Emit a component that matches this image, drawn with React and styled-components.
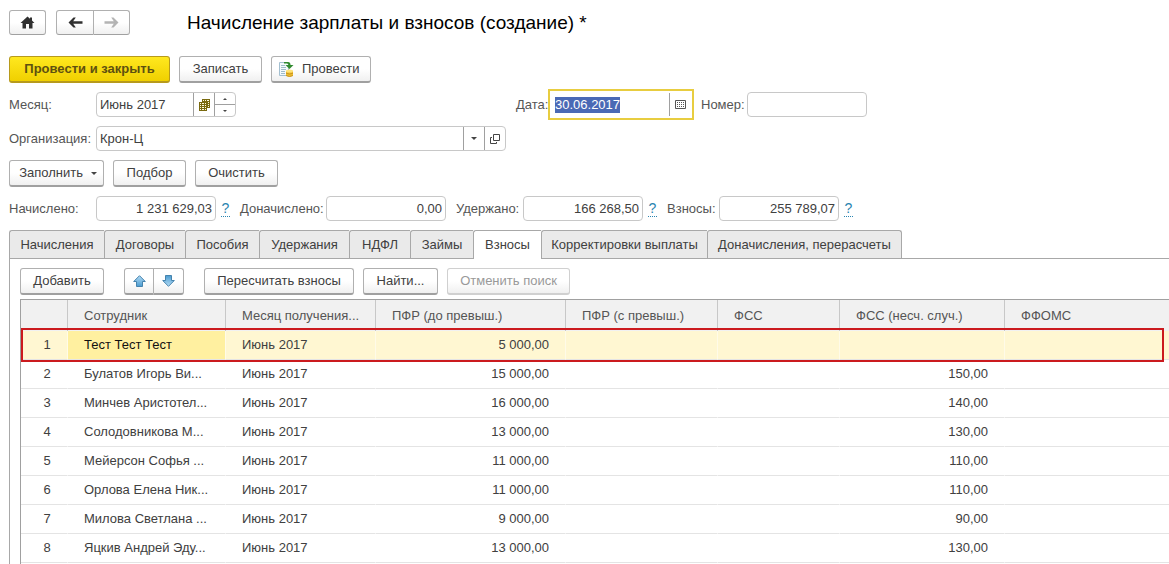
import React, { useState } from 'react';
import styled, { createGlobalStyle, css } from 'styled-components';

const GlobalStyle = createGlobalStyle`
  * {
    box-sizing: border-box;
  }
  body {
    margin: 0;
    background: #fff;
    color: #404040;
    font: 13px/16px 'Liberation Sans', Arial, sans-serif;
    overflow: hidden;
  }
  button, input {
    font: inherit;
    color: inherit;
  }
`;

const Page = styled.div`
  display: flex;
  flex-direction: column;
  min-height: 100vh;
  padding: 10px 0 0 9px;
`;

const Header = styled.header`
  display: flex;
  align-items: center;
  gap: 10px;
  height: 25px;
  h1 {
    margin: 0 0 0 47px;
    font-size: 19px;
    line-height: 24px;
    font-weight: normal;
    color: #000;
  }
`;

const Button = styled.button`
  display: flex;
  align-items: center;
  justify-content: center;
  gap: 8px;
  flex: none;
  width: ${(p) => p.$w}px;
  height: 27px;
  padding: 0;
  border: 1px solid #b0b0b0;
  border-bottom: 2px solid #a0a0a0;
  border-radius: 3px;
  background: linear-gradient(#fff 50%, #f0f0f0);
  white-space: nowrap;
  ${(p) =>
    p.$primary &&
    css`
      border-color: #b79a1c;
      background: linear-gradient(#ffe81f, #f0d000);
      color: #5e5010;
      font-weight: bold;
    `}
  &:disabled {
    border-color: #d0d0d0;
    color: #999;
  }
`;

const PostButton = styled(Button)`
  justify-content: flex-start;
  padding-left: 6px;
`;

const MenuButton = styled(Button)`
  justify-content: flex-end;
  padding-right: 6px;
`;

const ButtonGroup = styled.div`
  display: flex;
  ${Button} + ${Button} {
    border-left: 0;
    border-radius: 0 3px 3px 0;
  }
  ${Button}:first-child {
    border-radius: 3px 0 0 3px;
  }
`;

const NavButton = styled(Button)`
  height: 25px;
  border-bottom-width: 1px;
`;

const Toolbar = styled.div`
  display: flex;
  gap: 9px;
  margin-top: ${(p) => p.$top}px;
`;

const Row = styled.div`
  display: flex;
  align-items: center;
  height: 25px;
  margin-top: 9px;
`;

const Label = styled.label`
  flex: none;
  width: ${(p) => p.$w}px;
  color: #555;
  white-space: nowrap;
`;

const Field = styled.div`
  display: flex;
  flex: none;
  width: ${(p) => p.$w}px;
  height: 25px;
  border: 1px solid #c8c8c8;
  border-radius: 4px;
  background: #fff;
  input {
    flex: 1;
    min-width: 0;
    padding: 0 3px;
    border: 0;
    outline: 0;
    background: none;
    text-align: ${(p) => (p.$right ? 'right' : 'left')};
  }
  ${(p) =>
    p.$active &&
    css`
      height: 31px;
      padding: 2px;
      border: 2px solid #e8cd40;
      border-radius: 0;
      input::selection {
        background: #4a69b5;
        color: #fff;
      }
    `}
`;

const FieldButton = styled.button`
  display: flex;
  align-items: center;
  justify-content: center;
  flex: none;
  width: 21px;
  padding: 0;
  border: 0;
  border-left: 1px solid #a0a0a0;
  background: none;
`;

const Spinner = styled.div`
  display: flex;
  flex-direction: column;
  width: 21px;
  border-left: 1px solid #a0a0a0;
  button {
    display: flex;
    flex: 1;
    align-items: center;
    justify-content: center;
    padding: 0;
    border: 0;
    background: none;
  }
  button + button {
    border-top: 1px solid #a0a0a0;
  }
`;

const Spacer = styled.div`
  flex: none;
  width: ${(p) => p.$w}px;
`;

const Help = styled.a`
  flex: none;
  width: 9px;
  margin: 0 10px 0 5px;
  border-bottom: 1px dotted #2a84b0;
  color: #2a84b0;
  font-size: 14px;
  line-height: 15px;
  text-align: center;
  text-decoration: none;
`;

const Tabs = styled.div`
  display: flex;
  margin-top: 9px;
  border-bottom: 1px solid #a8a8a8;
`;

const Tab = styled.button`
  flex: none;
  width: ${(p) => p.$w}px;
  height: 28px;
  padding: 0;
  border: 1px solid #a8a8a8;
  border-width: 1px 0 0 1px;
  border-radius: 3px 0 0 0;
  background: #eaeaea;
  white-space: nowrap;
  &:last-child {
    border-right-width: 1px;
    border-radius: 3px 3px 0 0;
  }
  &[aria-selected='true'] {
    height: 29px;
    margin-bottom: -1px;
    background: #fff;
  }
`;

const Panel = styled.section`
  flex: 1;
  display: flex;
  flex-direction: column;
  padding-left: 10px;
  border-left: 1px solid #a8a8a8;
  ${ButtonGroup} {
    margin: 0 11px;
  }
`;

const TableFrame = styled.div`
  position: relative;
  flex: 1;
  margin-top: 4px;
  border: 1px solid #a0a0a0;
  border-width: 1px 0 0 1px;
`;

const Table = styled.table`
  width: 100%;
  table-layout: fixed;
  border-collapse: separate;
  border-spacing: 0;
  th,
  td {
    padding: 0 16px;
    border-right: 1px solid transparent;
    white-space: nowrap;
  }
  th:last-child,
  td:last-child {
    border-right: 0;
  }
  th {
    height: 31px;
    border-right-color: #c8c8c8;
    background: #f1f1f1;
    color: #555;
    font-weight: normal;
    text-align: left;
  }
  td {
    height: 29px;
    border-bottom: 1px solid #e4e4e4;
  }
  td:first-child {
    padding: 0 0 0 6px;
    text-align: center;
  }
`;

const BodyRow = styled.tr`
  ${(p) =>
    p.$selected &&
    css`
      td {
        border-right-color: #fffbe8;
        background: #fff7d2;
      }
      td:nth-child(2) {
        background: #fff0a0;
        color: #111;
      }
    `}
`;

const Amount = styled.td`
  text-align: right;
`;

const Highlight = styled.div`
  position: absolute;
  top: 28px;
  left: 0;
  right: 5px;
  height: 34px;
  border: 2px solid #cb1a1e;
  pointer-events: none;
`;

const HomeIcon = () => (
  <svg width='15' height='13' viewBox='0 0 15 13' fill='#303030'>
    <path d='M7.5 0.5L0.5 7H2.5V12.5H6V8H9V12.5H12.5V7H14.5L12 4.6V1.5H10V2.8Z' />
  </svg>
);

const ArrowIcon = ({ right, color }) => (
  <svg width='15' height='11' viewBox='0 0 15 11' fill={color}>
    <g transform={right ? 'translate(15 0) scale(-1 1)' : undefined}>
      <path d='M0.5 5.5L5.5 0.5H7.8L5.2 4.3H14.5V6.700H5.2L7.8 10.5H5.5Z' />
    </g>
  </svg>
);

const PostIcon = () => (
  <svg width='16' height='17' viewBox='0 0 16 17'>
    <path d='M1.5 1.5H10.5V14.5H1.5Z' fill='#f4f9fc' stroke='#a3bfd0' />
    <path d='M3 4.5H7M3 6.5H8M3 8.5H8M3 10.5H7M3 12.5H7' stroke='#9fbccb' />
    <path d='M6 1H10Q12.500 1 12.500 4H15.5L11.500 8L7.500 4H10.500Q10.500 2.500 9 2.500H6Z' fill='#2f8a2f' />
    <path d='M8 10V14.500Q11.500 17 15 14.500V10Z' fill='#f0c030' />
    <ellipse cx='11.500' cy='10' rx='3.500' ry='1.500' fill='#ffe27a' />
    <path
      d='M8 12.200Q11.500 14 15 12.200M8 14.500Q11.500 16.500 15 14.500'
      fill='none'
      stroke='#c99320'
    />
  </svg>
);

const MonthIcon = () => (
  <svg width='11' height='12' viewBox='0 0 11 12'>
    <path d='M3 0H11V9H8V12H0V3H3Z' fill='#7a6a10' />
    <path
      d='M4 1h1v1h-1zM6 1h1v1h-1zM8 1h2v1h-2zM9 3h1v1h-1zM9 5h1v1h-1zM9 7h1v1h-1zM1 4h1v1h-1zM3 4h2v1h-2zM6 4h1v1h-1zM1 6h1v1h-1zM3 6h2v1h-2zM6 6h1v1h-1zM1 8h1v1h-1zM3 8h2v1h-2zM6 8h1v1h-1zM1 10h1v1h-1zM3 10h2v1h-2zM6 10h1v1h-1z'
      fill='#fffbe0'
    />
  </svg>
);

const CalendarIcon = () => (
  <svg width='11' height='9' viewBox='0 0 11 9' fill='none'>
    <path d='M0.5 0.5H10.5V8.5H0.5Z' stroke='#555' />
    <path d='M2 2.500H9M2 4.500H9M2 6.500H9' stroke='#555' strokeDasharray='1 1' />
  </svg>
);

const OpenIcon = () => (
  <svg width='10' height='10' viewBox='0 0 10 10' fill='none' stroke='#444'>
    <path d='M3.500 0.500H9.500V6.500H3.500ZM2 3.500H0.500V9.500H6.500V8' />
  </svg>
);

const Caret = ({ up, small }) => (
  <svg width={small ? 4 : 6} height={small ? 2 : 3} viewBox='0 0 6 3' fill='#444'>
    <path d={up ? 'M0 3H6L3 0Z' : 'M0 0H6L3 3Z'} />
  </svg>
);

const MoveIcon = ({ down }) => (
  <svg width='13' height='12' viewBox='0 0 13 12'>
    <defs>
      <linearGradient id='move' x2='0' y2='1'>
        <stop stopColor='#b5dcf5' />
        <stop offset='1' stopColor='#4a9bd0' />
      </linearGradient>
    </defs>
    <path
      transform={down ? 'translate(0 12) scale(1 -1)' : undefined}
      d='M6.500 0.700L12.300 6.500H9.500V11.500H3.500V6.500H0.700Z'
      fill='url(#move)'
      stroke='#4583ad'
    />
  </svg>
);

const tabs = [
  ['Начисления', 95],
  ['Договоры', 81],
  ['Пособия', 74],
  ['Удержания', 90],
  ['НДФЛ', 61],
  ['Займы', 63],
  ['Взносы', 68],
  ['Корректировки выплаты', 166],
  ['Доначисления, перерасчеты', 195],
];

const columns = [
  ['', 47],
  ['Сотрудник', 158],
  ['Месяц получения...', 150],
  ['ПФР (до превыш.)', 190],
  ['ПФР (с превыш.)', 152],
  ['ФСС', 122],
  ['ФСС (несч. случ.)', 165],
  ['ФФОМС'],
];

const rows = [
  ['Тест Тест Тест', '5 000,00', ''],
  ['Булатов Игорь Ви...', '15 000,00', '150,00'],
  ['Минчев Аристотел...', '16 000,00', '140,00'],
  ['Солодовникова М...', '13 000,00', '130,00'],
  ['Мейерсон Софья ...', '11 000,00', '110,00'],
  ['Орлова Елена Ник...', '11 000,00', '110,00'],
  ['Милова Светлана ...', '9 000,00', '90,00'],
  ['Яцкив Андрей Эду...', '13 000,00', '130,00'],
];

function Total({ id, label, labelWidth, value, help }) {
  return (
    <>
      <Label htmlFor={id} $w={labelWidth}>
        {label}
      </Label>
      <Field $w={120} $right>
        <input id={id} defaultValue={value} />
      </Field>
      {help ? <Help href='#help'>?</Help> : <Spacer $w={10} />}
    </>
  );
}

function App() {
  const [tab, setTab] = useState('Взносы');
  const [selected, setSelected] = useState(0);

  return (
    <Page>
      <GlobalStyle />
      <Header>
        <NavButton $w={37} aria-label='Домой'>
          <HomeIcon />
        </NavButton>
        <ButtonGroup>
          <NavButton $w={38} aria-label='Назад'>
            <ArrowIcon color='#303030' />
          </NavButton>
          <NavButton $w={36} aria-label='Вперед'>
            <ArrowIcon right color='#b4b4b4' />
          </NavButton>
        </ButtonGroup>
        <h1>Начисление зарплаты и взносов (создание) *</h1>
      </Header>

      <Toolbar $top={21}>
        <Button $w={161} $primary>
          Провести и закрыть
        </Button>
        <Button $w={83}>Записать</Button>
        <PostButton $w={100}>
          <PostIcon />
          Провести
        </PostButton>
      </Toolbar>

      <Row>
        <Label htmlFor='month' $w={87}>
          Месяц:
        </Label>
        <Field $w={140}>
          <input id='month' defaultValue='Июнь 2017' />
          <FieldButton aria-label='Выбрать месяц'>
            <MonthIcon />
          </FieldButton>
          <Spinner>
            <button aria-label='Следующий месяц'>
              <Caret up small />
            </button>
            <button aria-label='Предыдущий месяц'>
              <Caret small />
            </button>
          </Spinner>
        </Field>
        <Spacer $w={280} />
        <Label htmlFor='date' $w={32}>
          Дата:
        </Label>
        <Field $w={146} $active>
          <input
            id='date'
            defaultValue='30.06.2017'
            autoFocus
            onFocus={(e) => e.target.select()}
          />
          <FieldButton aria-label='Выбрать дату'>
            <CalendarIcon />
          </FieldButton>
        </Field>
        <Spacer $w={7} />
        <Label htmlFor='number' $w={46}>
          Номер:
        </Label>
        <Field $w={120}>
          <input id='number' />
        </Field>
      </Row>

      <Row>
        <Label htmlFor='org' $w={87}>
          Организация:
        </Label>
        <Field $w={410}>
          <input id='org' defaultValue='Крон-Ц' />
          <FieldButton aria-label='Выбрать из списка'>
            <Caret />
          </FieldButton>
          <FieldButton aria-label='Открыть'>
            <OpenIcon />
          </FieldButton>
        </Field>
      </Row>

      <Toolbar $top={9}>
        <MenuButton $w={95}>
          Заполнить
          <Caret />
        </MenuButton>
        <Button $w={73}>Подбор</Button>
        <Button $w={83}>Очистить</Button>
      </Toolbar>

      <Row>
        <Total id='accrued' label='Начислено:' labelWidth={87} value='1 231 629,03' help />
        <Total id='extra' label='Доначислено:' labelWidth={86} value='0,00' />
        <Total id='withheld' label='Удержано:' labelWidth={67} value='166 268,50' help />
        <Total id='contrib' label='Взносы:' labelWidth={52} value='255 789,07' help />
      </Row>

      <Tabs role='tablist'>
        {tabs.map(([name, width]) => (
          <Tab
            key={name}
            role='tab'
            aria-selected={name === tab}
            $w={width}
            onClick={() => setTab(name)}
          >
            {name}
          </Tab>
        ))}
      </Tabs>

      <Panel>
        <Toolbar $top={9}>
          <Button $w={84}>Добавить</Button>
          <ButtonGroup>
            <Button $w={30} aria-label='Переместить вверх'>
              <MoveIcon />
            </Button>
            <Button $w={30} aria-label='Переместить вниз'>
              <MoveIcon down />
            </Button>
          </ButtonGroup>
          <Button $w={150}>Пересчитать взносы</Button>
          <Button $w={75}>Найти...</Button>
          <Button $w={123} disabled>
            Отменить поиск
          </Button>
        </Toolbar>
        <TableFrame>
          <Table>
            <colgroup>
              {columns.map(([name, width]) => (
                <col key={name} width={width} />
              ))}
            </colgroup>
            <thead>
              <tr>
                {columns.map(([name]) => (
                  <th key={name}>{name}</th>
                ))}
              </tr>
            </thead>
            <tbody>
              {rows.map(([name, pension, social], i) => (
                <BodyRow
                  key={name}
                  $selected={i === selected}
                  onClick={() => setSelected(i)}
                >
                  <td>{i + 1}</td>
                  <td>{name}</td>
                  <td>Июнь 2017</td>
                  <Amount>{pension}</Amount>
                  <td />
                  <td />
                  <Amount>{social}</Amount>
                  <td />
                </BodyRow>
              ))}
            </tbody>
          </Table>
          <Highlight />
        </TableFrame>
      </Panel>
    </Page>
  );
}

export default App;
